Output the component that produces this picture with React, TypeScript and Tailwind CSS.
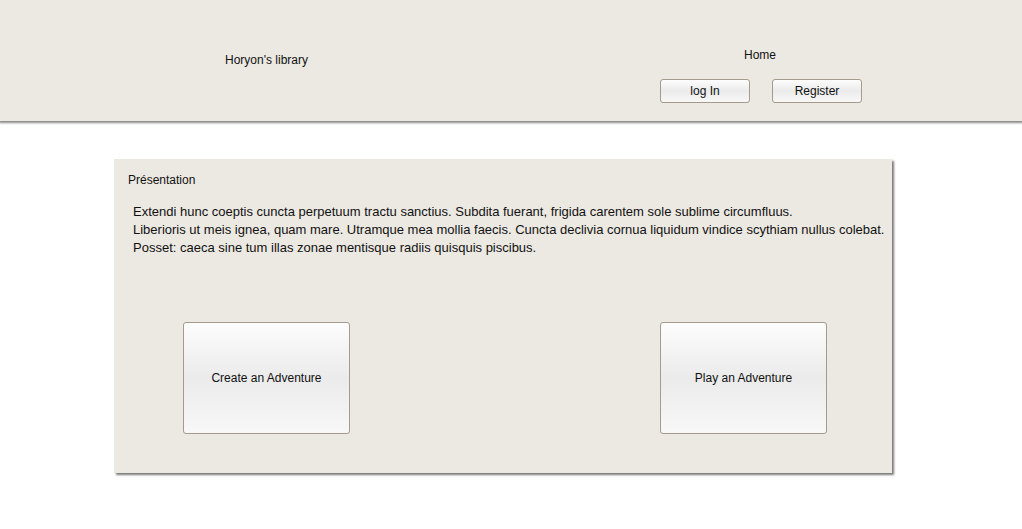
import React from "react";

const btn =
  "rounded-[3px] border border-[#a59a8c] bg-gradient-to-b from-[#fdfdfd] via-[#ebebeb] to-[#f8f8f8] text-[12px] text-[#111] flex items-center justify-center";

export default function App() {
  return (
    <div
      className="w-[1022px] h-[529px] bg-white relative overflow-hidden"
      style={{ fontFamily: '"Liberation Sans", Arial, sans-serif' }}
    >
      <header className="h-[121px] bg-[#ece9e3] shadow-[0_1px_2px_1px_#8a8a8a] relative z-10 flex">
        <div className="w-[533px] flex justify-center pt-[52px]">
          <span className="text-[12px] leading-[16px] text-[#111]">Horyon's library</span>
        </div>
        <div className="flex flex-col pt-[47px] pl-[127px]">
          <div className="w-[200px] text-center text-[12px] leading-[16px] text-[#111]">Home</div>
          <div className="flex gap-[22px] mt-[16px]">
            <button className={`${btn} w-[90px] h-[24px]`}>log In</button>
            <button className={`${btn} w-[90px] h-[24px]`}>Register</button>
          </div>
        </div>
      </header>
      <main className="pt-[38px] pl-[114px]">
        <section className="w-[778px] h-[314px] bg-[#ece9e3] shadow-[2px_2px_2px_#7a7a7a] pt-[13px]">
          <div className="pl-[14px] text-[12px] text-[#111] leading-[16px]">Présentation</div>
          <p className="pl-[19px] mt-[15px] text-[13px] leading-[18px] text-[#111]">
            Extendi hunc coeptis cuncta perpetuum tractu sanctius. Subdita fuerant, frigida carentem sole sublime circumfluus.
            <br />
            Liberioris ut meis ignea, quam mare. Utramque mea mollia faecis. Cuncta declivia cornua liquidum vindice scythiam nullus colebat.
            <br />
            Posset: caeca sine tum illas zonae mentisque radiis quisquis piscibus.
          </p>
          <div className="flex justify-between pl-[69px] pr-[65px] mt-[65px]">
            <button className={`${btn} w-[167px] h-[112px]`}>Create an Adventure</button>
            <button className={`${btn} w-[167px] h-[112px]`}>Play an Adventure</button>
          </div>
        </section>
      </main>
    </div>
  );
}
